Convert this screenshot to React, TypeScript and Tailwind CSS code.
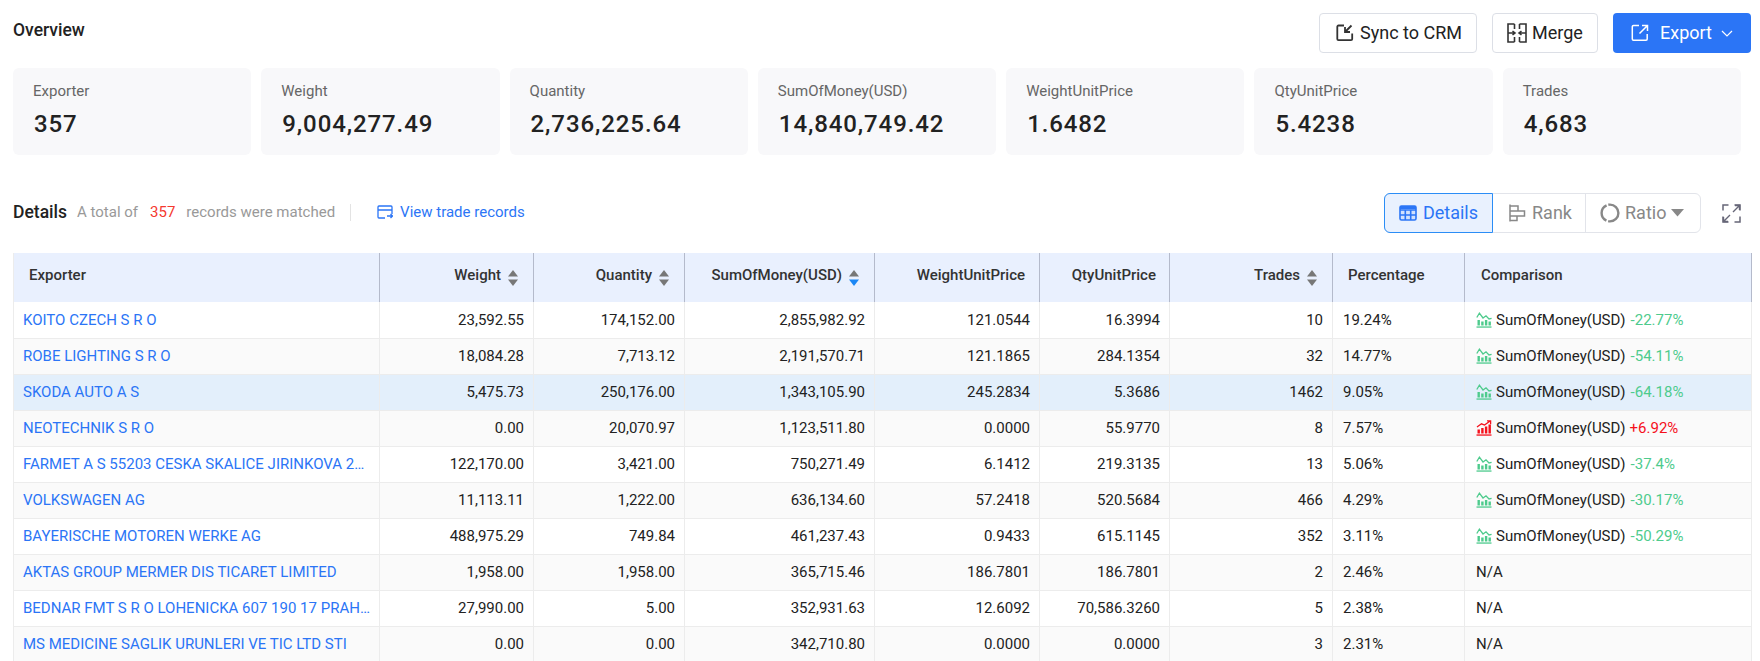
const rows = [
  ["KOITO CZECH S R O", "23,592.55", "174,152.00", "2,855,982.92", "121.0544", "16.3994", "10", "19.24%", "-22.77%"],
  ["ROBE LIGHTING S R O", "18,084.28", "7,713.12", "2,191,570.71", "121.1865", "284.1354", "32", "14.77%", "-54.11%"],
  ["SKODA AUTO A S", "5,475.73", "250,176.00", "1,343,105.90", "245.2834", "5.3686", "1462", "9.05%", "-64.18%"],
  ["NEOTECHNIK S R O", "0.00", "20,070.97", "1,123,511.80", "0.0000", "55.9770", "8", "7.57%", "+6.92%"],
  ["FARMET A S 55203 CESKA SKALICE JIRINKOVA 276", "122,170.00", "3,421.00", "750,271.49", "6.1412", "219.3135", "13", "5.06%", "-37.4%"],
  ["VOLKSWAGEN AG", "11,113.11", "1,222.00", "636,134.60", "57.2418", "520.5684", "466", "4.29%", "-30.17%"],
  ["BAYERISCHE MOTOREN WERKE AG", "488,975.29", "749.84", "461,237.43", "0.9433", "615.1145", "352", "3.11%", "-50.29%"],
  ["AKTAS GROUP MERMER DIS TICARET LIMITED", "1,958.00", "1,958.00", "365,715.46", "186.7801", "186.7801", "2", "2.46%", ""],
  ["BEDNAR FMT S R O LOHENICKA 607 190 17 PRAHA 9", "27,990.00", "5.00", "352,931.63", "12.6092", "70,586.3260", "5", "2.38%", ""],
  ["MS MEDICINE SAGLIK URUNLERI VE TIC LTD STI", "0.00", "0.00", "342,710.80", "0.0000", "0.0000", "3", "2.31%", ""],
];

const stats = [
  ["Exporter", "357"],
  ["Weight", "9,004,277.49"],
  ["Quantity", "2,736,225.64"],
  ["SumOfMoney(USD)", "14,840,749.42"],
  ["WeightUnitPrice", "1.6482"],
  ["QtyUnitPrice", "5.4238"],
  ["Trades", "4,683"],
];

function Sort({ active }: { active?: boolean }) {
  return (
    <svg width="10" height="16" viewBox="0 0 10 16" className="ml-[7px] shrink-0">
      <path d="M5 0 L10 6.5 H0 Z" fill="#777" />
      <path d="M0 9.5 H10 L5 16 Z" fill={active ? "#1b87f5" : "#777"} />
    </svg>
  );
}

function Trend({ up }: { up: boolean }) {
  const c = up ? "#f5101c" : "#4ecb8d";
  return (
    <svg width="16" height="16" viewBox="0 0 16 16" className="shrink-0" fill="none">
      <rect x="0.5" y="14.4" width="15" height="1.3" fill={c} />
      {up ? (
        <>
          <rect x="1.5" y="9.5" width="2.4" height="4" fill={c} />
          <rect x="5.2" y="8" width="2.4" height="5.5" fill={c} />
          <rect x="8.9" y="6.5" width="2.4" height="7" fill={c} />
          <rect x="12.5" y="4.5" width="2.4" height="9" fill={c} />
          <path d="M1 7 L5.5 3.8 L8.5 5 L13.8 1.2 M11 .8 H14.6 V4.2" stroke={c} strokeWidth="1.3" />
        </>
      ) : (
        <>
          <rect x="1.5" y="8" width="2.4" height="5.5" fill={c} />
          <rect x="5.2" y="9.5" width="2.4" height="4" fill={c} />
          <rect x="8.9" y="8" width="2.4" height="5.5" fill={c} />
          <rect x="12.5" y="9.5" width="2.4" height="4" fill={c} />
          <path d="M.8 5.5 L3.4 1.2 L7 6 L10 3.8 L13 7 L15.6 6.4" stroke={c} strokeWidth="1.3" />
        </>
      )}
    </svg>
  );
}

const th = "h-[49px] bg-[#e9f0fe] border-r border-[#b4bacb] text-[15px] font-medium text-[#333] p-0";
const td = "h-9 border-r border-b border-[#ececec] text-[15px] leading-5 font-normal whitespace-nowrap";
const num = `${td} pl-[10px] pr-[9px] text-right text-[#222]`;

function HeadR({ label, sort, active, pr = "pr-[15px]" }: { label: string; sort?: boolean; active?: boolean; pr?: string }) {
  return (
    <th className={th}>
      <div className={`flex items-center justify-end ${pr}`}>
        <span className="-mt-[4px]">{label}</span>
        {sort && <Sort active={active} />}
      </div>
    </th>
  );
}

export default function App() {
  return (
    <div
      className="h-[661px] w-[1760px] overflow-hidden bg-white"
      style={{ fontFamily: "Roboto, 'Liberation Sans', sans-serif" }}
    >
      <div className="pl-[13px] pr-[9px] pt-[13px]">
        <div className="flex h-10 items-start justify-between">
          <h2 className="mt-[7px] text-[17.5px] leading-5 font-medium text-[#222]">Overview</h2>
          <div className="flex items-center gap-[15px]">
            <button className="flex h-10 w-[158px] items-center justify-center gap-[6px] rounded border border-[#dcdfe6] bg-white pl-[2px] text-lg text-[#222]">
              <svg width="18" height="18" viewBox="0 0 18 18" fill="none" stroke="#333" strokeWidth="1.8">
                <path d="M8 1.5 H2.5 a1.2 1.2 0 0 0 -1.2 1.2 V15 a1.2 1.2 0 0 0 1.2 1.2 H15 a1.2 1.2 0 0 0 1.2 -1.2 V9.5" />
                <path d="M15.5 1.5 L9 8 M9 3 V8 H14" />
              </svg>
              Sync to CRM
            </button>
            <button className="flex h-10 w-[106px] items-center justify-center gap-[5px] rounded border border-[#dcdfe6] bg-white text-lg text-[#222]">
              <svg width="20" height="20" viewBox="0 0 20 20" fill="none" stroke="#333" strokeWidth="1.6">
                <path d="M7.5 1 H1 V19 H7.5 M12.5 1 H19 V19 H12.5 M7.5 1 V6 M7.5 14 V19 M12.5 1 V6 M12.5 14 V19" />
                <path d="M1 10 H8 M5.5 8 L8 10 L5.5 12 M19 10 H12 M14.5 8 L12 10 L14.5 12" />
              </svg>
              Merge
            </button>
            <button className="flex h-10 w-[138px] items-center justify-center rounded bg-[#2b75f6] text-lg text-white">
              <svg width="18" height="18" viewBox="0 0 18 18" fill="none" stroke="#fff" strokeWidth="1.5" className="mr-[11px]">
                <path d="M8 1.5 H2.5 a1.2 1.2 0 0 0 -1.2 1.2 V15 a1.2 1.2 0 0 0 1.2 1.2 H15 a1.2 1.2 0 0 0 1.2 -1.2 V10" />
                <path d="M8.5 9.5 L16 2 M11 1.5 H16.5 V7" />
              </svg>
              Export
              <svg width="12" height="12" viewBox="0 0 12 12" fill="none" stroke="#fff" strokeWidth="1.2" className="ml-[9px]">
                <path d="M1 4 L6 9 L11 4" />
              </svg>
            </button>
          </div>
        </div>

        <div className="mt-[15px] grid w-[1728px] grid-cols-7 gap-[10px]">
          {stats.map(([l, v]) => (
            <div key={l} className="h-[87px] rounded-md bg-[#f8f8fa] pl-5 pt-[13px]">
              <div className="text-[15px] leading-5 text-[#666]">{l}</div>
              <div className="mt-[9px] ml-px text-2xl leading-7 font-medium tracking-[0.9px] text-[#222]">{v}</div>
            </div>
          ))}
        </div>

        <div className="mt-[38px] flex h-10 items-center">
          <span className="-mt-[2px] text-[17.5px] font-medium text-[#222]">Details</span>
          <span className="-mt-[2px] ml-[10px] text-[15px] text-[#999]">A total of</span>
          <span className="-mt-[2px] ml-[12px] text-[15px] text-[#f5392f]">357</span>
          <span className="-mt-[2px] ml-[11px] text-[15px] text-[#999]">records were matched</span>
          <span className="-mt-[2px] ml-[15px] h-[17px] w-px bg-[#e3e3e3]" />
          <span className="-mt-[2px] ml-[26px] flex items-center gap-[7px] text-[15px] text-[#2b75f6]">
            <svg width="16" height="16" viewBox="0 0 16 16" fill="none" stroke="#2b75f6" strokeWidth="1.3">
              <path d="M8 14 H2 a1 1 0 0 1 -1 -1 V3 a1 1 0 0 1 1 -1 H14 a1 1 0 0 1 1 1 V10" />
              <path d="M1 6 H15 M10 12 H15.5 M13.5 10 L15.5 12 L13.5 14" />
            </svg>
            View trade records
          </span>
          <div className="ml-auto flex h-10 w-[317px] items-stretch rounded-md border border-[#e2e4ea] text-lg text-[#888]">
            <div className="-my-px -ml-px flex w-[109px] items-center justify-center gap-[6px] rounded-l-md border border-[#2b8df6] bg-[#e9f1fe] text-[#2b75f6]">
              <svg width="18" height="18" viewBox="0 0 18 18" fill="none" stroke="#2b75f6" strokeWidth="1.6">
                <rect x="1" y="2" width="16" height="14" rx="1.5" fill="#2b75f6" fillOpacity=".12" />
                <path d="M1 6 H17 M1 11 H17 M6.3 6 V16 M11.7 6 V16" />
                <path d="M1 3.5 H17" strokeWidth="3" />
              </svg>
              Details
            </div>
            <div className="flex w-[93px] items-center justify-center gap-[6px] border-r border-[#e2e4ea] pl-[2px]">
              <svg width="18" height="18" viewBox="0 0 18 18" fill="none" stroke="#888" strokeWidth="1.5">
                <path d="M2 0.5 V17.5 M2 2 H10 V7 H2 M2 7 H16.5 V12 H2 M2 12 H9 V16.5 H2" />
              </svg>
              Rank
            </div>
            <div className="flex flex-1 items-center gap-[5px] pl-[14px]">
              <svg width="20" height="20" viewBox="0 0 20 20" fill="none" stroke="#888" strokeWidth="2.4">
                <circle cx="10" cy="10" r="8.4" strokeDasharray="15 1.8 19 1.8 15 1.8" />
              </svg>
              Ratio
              <svg width="13" height="8" viewBox="0 0 13 8">
                <path d="M0 0 H13 L6.5 7.5 Z" fill="#888" />
              </svg>
            </div>
          </div>
          <svg width="19" height="19" viewBox="0 0 19 19" fill="none" stroke="#667" strokeWidth="1.5" className="ml-[21px] mr-[10px]">
            <path d="M1 6.5 V1 H6.5 M12.5 1 H18 V6.5 M18 12.5 V18 H12.5 M6.5 18 H1 V12.5" />
            <path d="M11 8 L17 2 M13 1.5 H17.5 V6 M8 11 L2 17 M1.5 13 V17.5 H6" strokeWidth="1.4" />
          </svg>
        </div>

        <table className="mt-5 w-[1738px] table-fixed border-collapse border-l border-[#ececec]">
          <colgroup>
            <col className="w-[366px]" />
            <col className="w-[154px]" />
            <col className="w-[151px]" />
            <col className="w-[190px]" />
            <col className="w-[165px]" />
            <col className="w-[130px]" />
            <col className="w-[163px]" />
            <col className="w-[132px]" />
            <col className="w-[287px]" />
          </colgroup>
          <thead>
            <tr>
              <th className={`${th} pl-[15px] text-left`}><span className="relative -top-[2px]">Exporter</span></th>
              <HeadR label="Weight" sort />
              <HeadR label="Quantity" sort />
              <HeadR label="SumOfMoney(USD)" sort active />
              <HeadR label="WeightUnitPrice" pr="pr-[14px]" />
              <HeadR label="QtyUnitPrice" pr="pr-[13px]" />
              <HeadR label="Trades" sort />
              <th className={`${th} pl-[15px] text-left`}><span className="relative -top-[2px]">Percentage</span></th>
              <th className={`${th} pl-[16px] text-left`}><span className="relative -top-[2px]">Comparison</span></th>
            </tr>
          </thead>
          <tbody>
            {rows.map((r, i) => {
              const bg = i === 2 ? "bg-[#e3effb]" : i % 2 === 1 ? "bg-[#fafafa]" : "bg-white";
              const up = r[8].startsWith("+");
              return (
                <tr key={r[0]} className={bg}>
                  <td className={`${td} max-w-0 truncate pl-[9px] pr-[8px] text-left text-[#2b75f6]`}>{r[0]}</td>
                  <td className={num}>{r[1]}</td>
                  <td className={num}>{r[2]}</td>
                  <td className={num}>{r[3]}</td>
                  <td className={num}>{r[4]}</td>
                  <td className={num}>{r[5]}</td>
                  <td className={num}>{r[6]}</td>
                  <td className={`${td} pl-[10px] text-left text-[#222]`}>{r[7]}</td>
                  <td className={`${td} pl-[11px] text-left text-[#222]`}>
                    {r[8] ? (
                      <div className="flex items-center gap-[4px]">
                        <Trend up={up} />
                        <span>SumOfMoney(USD)</span>
                        <span className={up ? "text-[#f5101c]" : "pl-[1px] text-[#4ecb8d]"}>{r[8]}</span>
                      </div>
                    ) : (
                      <span>N/A</span>
                    )}
                  </td>
                </tr>
              );
            })}
          </tbody>
        </table>
      </div>
    </div>
  );
}
